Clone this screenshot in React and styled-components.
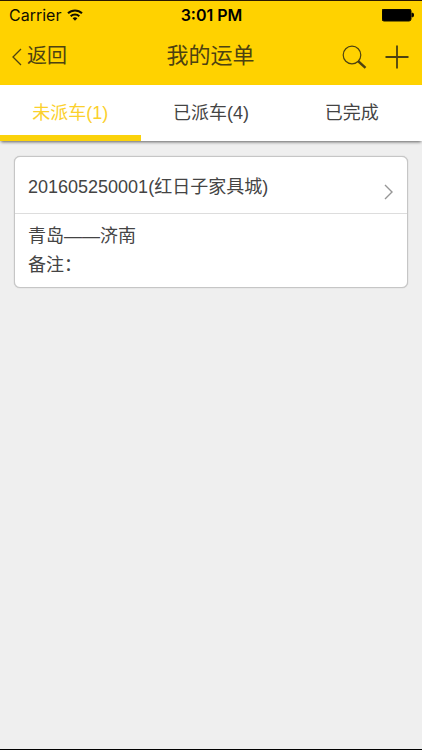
import React, { useState } from "react";
import styled, { createGlobalStyle } from "styled-components";

const GlobalStyle = createGlobalStyle`
  * {
    box-sizing: border-box;
  }

  body {
    margin: 0;
    background: #efefef;
    color: #444;
    font-family: "Liberation Sans", "Noto Sans CJK SC", sans-serif;
    font-size: 18px;
  }

  button {
    padding: 0;
    border: 0;
    background: none;
    color: inherit;
    font: inherit;
    cursor: pointer;
  }

  svg {
    display: block;
    fill: none;
    stroke: currentColor;
  }
`;

const Screen = styled.div`
  min-height: 100vh;
  border-top: 1px solid #2b1800;
  border-bottom: 1px solid #000;
`;

const Header = styled.header`
  background: #ffd200;
`;

const StatusBar = styled.div`
  display: grid;
  grid-template-columns: 1fr auto 1fr;
  align-items: center;
  height: 28px;
  padding: 0 8px 0 9px;
  color: #110e00;
  font-family: Inter, sans-serif;
  font-size: 16px;
`;

const Carrier = styled.span`
  display: flex;
  align-items: center;
  gap: 6px;
`;

const Clock = styled.span`
  color: #000;
  font-weight: 600;
`;

const Battery = styled.span`
  justify-self: end;
`;

const NavBar = styled.div`
  display: grid;
  grid-template-columns: 1fr auto 1fr;
  align-items: center;
  height: 56px;
  padding: 0 13px 0 12px;
  color: #4d4211;
`;

const BackLink = styled.a`
  display: flex;
  align-items: center;
  gap: 5px;
  padding-bottom: 2px;
  color: inherit;
  font-size: 20px;
  line-height: 28px;
  text-decoration: none;

  svg {
    margin-top: 2px;
  }
`;

const Title = styled.h1`
  margin: 0;
  padding-bottom: 2px;
  font-size: 22px;
  font-weight: 400;
  line-height: 32px;
`;

const Actions = styled.div`
  display: flex;
  align-items: center;
  justify-content: flex-end;
  gap: 18px;
`;

const Tabs = styled.nav`
  display: flex;
  height: 56px;
  background: #fff;
  box-shadow: 0 2px 3px -1px rgba(0, 0, 0, 0.6);
`;

const Tab = styled.button`
  && {
    flex: 1;
    padding-top: 2px;
    border-bottom: 6px solid ${({ $active }) => ($active ? "#fbd20b" : "#fff")};
    color: ${({ $active }) => ($active ? "#fbd02c" : "#444")};
  }
`;

const List = styled.main`
  padding: 15px 14px;
`;

const Card = styled.article`
  border: 1px solid #c6c6c6;
  border-radius: 6px;
  background: #fff;
  box-shadow: 0 0 1px rgba(0, 0, 0, 0.3);
`;

const CardLink = styled.a`
  display: flex;
  align-items: center;
  justify-content: space-between;
  height: 57px;
  padding: 0 14px 0 13px;
  border-bottom: 1px solid #ddd;
  color: inherit;
  text-decoration: none;

  svg {
    margin-top: 14px;
    color: #969696;
  }
`;

const CardBody = styled.div`
  padding: 8px 13px 7px;

  p {
    margin: 0;
    line-height: 29px;
  }
`;

const tabs = ["未派车(1)", "已派车(4)", "已完成"];

const orders = [
  {
    id: "201605250001",
    customer: "红日子家具城",
    from: "青岛",
    to: "济南",
    remark: "",
  },
];

function WifiIcon() {
  return (
    <svg width="16" height="13" viewBox="0 0 16 13" strokeWidth="2">
      <path d="M1 4.3a10 10 0 0 1 14 0" />
      <path d="M3.7 7.2a6.2 6.2 0 0 1 8.6 0" />
      <path d="M5.6 9.3a3.5 3.5 0 0 1 4.8 0L8 11.7z" fill="currentColor" stroke="none" />
    </svg>
  );
}

function BatteryIcon() {
  return (
    <svg width="32" height="13" viewBox="0 0 32 13" stroke="none">
      <rect width="29" height="12" rx="2" fill="#000" />
      <path d="M30 4q2 .5 2 2t-2 2z" fill="#000" />
    </svg>
  );
}

function App() {
  const [active, setActive] = useState(0);

  return (
    <>
      <GlobalStyle />
      <Screen>
        <Header>
          <StatusBar>
            <Carrier>
              Carrier
              <WifiIcon />
            </Carrier>
            <Clock>3:01 PM</Clock>
            <Battery>
              <BatteryIcon />
            </Battery>
          </StatusBar>
          <NavBar>
            <BackLink href="#back">
              <svg width="10" height="18" viewBox="0 0 10 18" strokeWidth="1.3">
                <path d="M9 1L1 9l8 8" />
              </svg>
              返回
            </BackLink>
            <Title>我的运单</Title>
            <Actions>
              <button aria-label="搜索">
                <svg width="25" height="24" viewBox="0 0 25 24">
                  <circle cx="10" cy="10" r="8.8" strokeWidth="1.2" />
                  <path d="M16 16l7.5 6.8" strokeWidth="2.4" />
                </svg>
              </button>
              <button aria-label="添加">
                <svg width="24" height="24" viewBox="0 0 24 24" strokeWidth="1.8">
                  <path d="M12 .5v23M.5 12h23" />
                </svg>
              </button>
            </Actions>
          </NavBar>
        </Header>

        <Tabs>
          {tabs.map((label, index) => (
            <Tab
              key={label}
              $active={index === active}
              onClick={() => setActive(index)}
            >
              {label}
            </Tab>
          ))}
        </Tabs>

        <List>
          {orders.map((order) => (
            <Card key={order.id}>
              <CardLink href={`#${order.id}`}>
                <span>
                  {order.id}({order.customer})
                </span>
                <svg width="9" height="16" viewBox="0 0 9 16" strokeWidth="1.4">
                  <path d="M1 1l7 7-7 7" />
                </svg>
              </CardLink>
              <CardBody>
                <p>
                  {order.from}——{order.to}
                </p>
                <p>备注：{order.remark}</p>
              </CardBody>
            </Card>
          ))}
        </List>
      </Screen>
    </>
  );
}

export default App;
